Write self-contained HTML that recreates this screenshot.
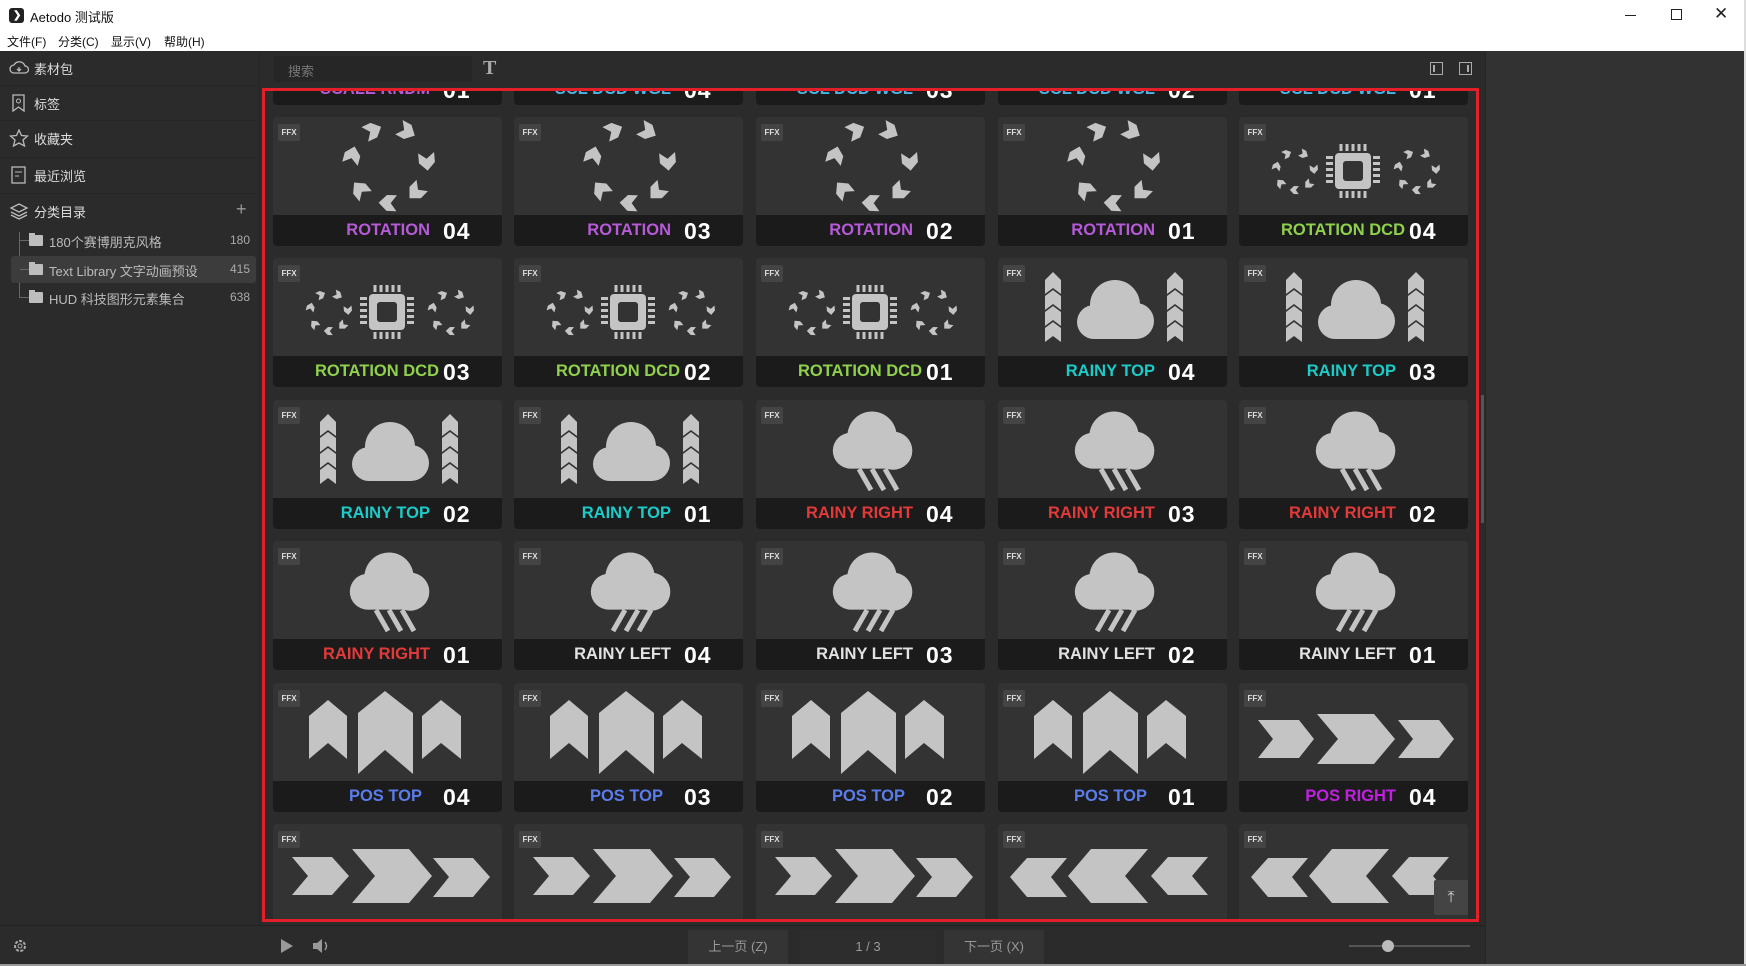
<!DOCTYPE html>
<html><head><meta charset="utf-8">
<style>
*{margin:0;padding:0;box-sizing:border-box}
body{width:1746px;height:966px;overflow:hidden;background:#2b2b2b;font-family:"Liberation Sans","Noto Sans CJK SC",sans-serif;position:relative;color:#ddd}
.abs{position:absolute}
#title{left:0;top:0;width:1746px;height:31px;background:#fff;color:#111;font-size:13px}
#menu{left:0;top:31px;width:1746px;height:20px;background:#fff;color:#111;font-size:12px}
#side{left:0;top:51px;width:260px;height:874px;background:#2b2b2b;border-right:1px solid #262626}
.si{position:absolute;left:0;width:260px;height:35px;font-size:13px;color:#ddd;border-bottom:1px solid #262626}
.si span{position:absolute;left:34px;top:8px}
.si svg{position:absolute;left:9px;top:8px}
.tr{position:absolute;left:11px;width:245px;height:27px;font-size:13px;color:#bbb}
.tr .t{position:absolute;left:38px;top:5px}
.tr .cnt{position:absolute;right:6px;top:6px;font-size:12px;color:#aaa}
.tr .fd{position:absolute;left:18px;top:8px;width:14px;height:11px;background:#bdbdbd;border-radius:1px}
.tr .fd:before{content:"";position:absolute;left:0;top:-2px;width:6px;height:3px;background:#bdbdbd}
#grid{left:265px;top:91px;width:1211px;height:828px;overflow:hidden;background:#2b2b2b}
.c{position:absolute;width:229px;height:129px;background:#333;border-radius:4px}
.c svg{position:absolute;left:0;top:0;width:229px;height:98px}
.f{position:absolute;left:5px;top:7px;width:22px;height:17px;background:#444;border-radius:2px;font:bold 8px "Liberation Sans",sans-serif;color:#ddd;text-align:center;line-height:17px;z-index:2}
.l{position:absolute;left:0;top:98px;width:229px;height:31px;background:#1b1b1b;border-radius:0 0 4px 4px}
.n{position:absolute;right:72px;top:6px;font:bold 16.5px "Liberation Sans",sans-serif;white-space:nowrap}
.d{position:absolute;left:170px;top:3px;font:bold 23px "Liberation Sans",sans-serif;color:#fff;letter-spacing:1px}
.P{color:#b65ad8}.G{color:#8fd04c}.C{color:#1ccbc8}.R{color:#e23a3a}.W{color:#e2e2e2}.B{color:#5b7ceb}.M{color:#c21fe2}.S{color:#4cb4e4}
.btn{position:absolute;top:930px;height:34px;background:#343434;color:#999;font-size:13px;text-align:center;line-height:34px}
</style></head><body>
<svg width="0" height="0" style="position:absolute">
<defs>
<path id="ar" d="M-9,-8 L1,-8 L9,0 L1,8 L-9,8 L-3,0Z"/>
<g id="ring">
<use href="#ar" transform="rotate(-115) translate(38,0) rotate(90)"/>
<use href="#ar" transform="rotate(-62) translate(38,0) rotate(90)"/>
<use href="#ar" transform="rotate(-5) translate(38,0) rotate(90)"/>
<use href="#ar" transform="rotate(45) translate(38,0) rotate(90)"/>
<use href="#ar" transform="rotate(92) translate(38,0) rotate(90)"/>
<use href="#ar" transform="rotate(140) translate(38,0) rotate(90)"/>
<use href="#ar" transform="rotate(195) translate(38,0) rotate(90)"/>
</g>
<symbol id="rot" viewBox="0 0 229 98"><g fill="#c4c4c4" transform="translate(116,48)"><use href="#ring"/></g></symbol>
<symbol id="dcd" viewBox="0 0 229 98"><g fill="#c4c4c4">
<g transform="translate(56,54) scale(0.5)"><use href="#ring"/></g>
<g transform="translate(178,54) scale(0.5)"><use href="#ring"/></g>
<rect x="96" y="36" width="36" height="36" rx="4"/>
<rect x="100.5" y="27" width="3" height="7"/><rect x="106.5" y="27" width="3" height="7"/><rect x="112.5" y="27" width="3" height="7"/><rect x="118.5" y="27" width="3" height="7"/><rect x="124.5" y="27" width="3" height="7"/>
<rect x="100.5" y="74" width="3" height="7"/><rect x="106.5" y="74" width="3" height="7"/><rect x="112.5" y="74" width="3" height="7"/><rect x="118.5" y="74" width="3" height="7"/><rect x="124.5" y="74" width="3" height="7"/>
<rect x="87" y="39" width="7" height="3"/><rect x="87" y="45" width="7" height="3"/><rect x="87" y="51" width="7" height="3"/><rect x="87" y="57" width="7" height="3"/><rect x="87" y="63" width="7" height="3"/>
<rect x="134" y="39" width="7" height="3"/><rect x="134" y="45" width="7" height="3"/><rect x="134" y="51" width="7" height="3"/><rect x="134" y="57" width="7" height="3"/><rect x="134" y="63" width="7" height="3"/>
</g><rect x="104" y="44" width="20" height="20" rx="3" fill="#333"/></symbol>
<g id="stk"><path d="M-8,-30 L0,-38 L8,-30 L8,-16 L0,-22 L-8,-16Z M-8,-14 L0,-20 L8,-14 L8,0 L0,-6 L-8,0Z M-8,2 L0,-4 L8,2 L8,16 L0,10 L-8,16Z M-8,18 L0,12 L8,18 L8,32 L0,26 L-8,32Z"/></g>
<symbol id="rtop" viewBox="0 0 229 98"><g fill="#c4c4c4">
<circle cx="96" cy="64" r="17"/><circle cx="117" cy="47" r="25"/><circle cx="138" cy="63" r="18"/><rect x="96" y="55" width="42" height="26"/>
<use href="#stk" transform="translate(55,52)"/><use href="#stk" transform="translate(177,52)"/></g></symbol>
<g id="cl" transform="translate(116,44) scale(1.12) translate(-116,-40)"><circle cx="97" cy="46" r="16"/><circle cx="116" cy="33" r="22"/><circle cx="135" cy="46" r="17"/><rect x="97" y="40" width="38" height="22"/></g>
<symbol id="rr" viewBox="0 0 229 98"><g fill="#c4c4c4"><use href="#cl"/></g><g stroke="#c4c4c4" stroke-width="5"><path d="M103,69 L115,90 M116,69 L128,90 M129,69 L141,90"/></g></symbol>
<symbol id="rl" viewBox="0 0 229 98"><g fill="#c4c4c4"><use href="#cl"/></g><g stroke="#c4c4c4" stroke-width="5"><path d="M111,69 L99,90 M124,69 L112,90 M137,69 L125,90"/></g></symbol>
<symbol id="ptop" viewBox="0 0 229 98"><g fill="#c4c4c4">
<path d="M36,33 L55,17 L74,33 L74,76 L55,60 L36,76Z"/>
<path d="M85,30 L112,8 L140,30 L140,91 L112,67 L85,91Z"/>
<path d="M149,33 L168,17 L188,33 L188,76 L168,60 L149,76Z"/></g></symbol>
<symbol id="pr" viewBox="0 0 229 98"><g fill="#c4c4c4">
<path d="M19,33 L59,33 L76,52 L59,71 L19,71 L35,52Z"/>
<path d="M79,25 L136,25 L159,52 L136,79 L79,79 L102,52Z"/>
<path d="M160,34 L200,34 L217,53 L200,73 L160,73 L176,53Z"/></g></symbol>
<symbol id="prs" viewBox="0 0 229 98"><g fill="#c4c4c4">
<path d="M19,37 L60,37 L75,56 L60,75 L19,75 L34,56Z"/>
<path d="M78,31 L135,31 L156,56 L135,81 L78,81 L99,56Z"/>
<path d="M159,37 L200,37 L215,56 L200,75 L159,75 L174,56Z"/></g></symbol>
<symbol id="pl" viewBox="0 0 229 98"><g transform="translate(229,0) scale(-1,1)"><use href="#pr"/></g></symbol>
</defs></svg>

<div id="title" class="abs">
<div class="abs" style="left:9px;top:8px;width:15px;height:15px;background:#222;border-radius:3px"></div>
<div class="abs" style="left:13px;top:10px;color:#fff;font-size:10px;font-weight:bold">&#10095;</div>
<div class="abs" style="left:30px;top:7px">Aetodo 测试版</div>
<div class="abs" style="left:1625px;top:15px;width:11px;height:1px;background:#222"></div>
<div class="abs" style="left:1671px;top:9px;width:11px;height:11px;border:1px solid #222"></div>
<div class="abs" style="left:1714px;top:4px;font-size:17px;color:#222">&#x2715;</div>
</div>
<div id="menu" class="abs"><span class="abs" style="left:7px;top:2px">文件(F)</span><span class="abs" style="left:58px;top:2px">分类(C)</span><span class="abs" style="left:111px;top:2px">显示(V)</span><span class="abs" style="left:164px;top:2px">帮助(H)</span></div>

<div id="side" class="abs">
<div class="si" style="top:0"><svg width="20" height="18"><path d="M5,14 A4,4 0 0 1 5,6 A6,6 0 0 1 16,7 A3.5,3.5 0 0 1 16,14Z M10,8 V12 M8,10 L10,12 L12,10" fill="none" stroke="#bbb" stroke-width="1.3"/></svg><span>素材包</span></div>
<div class="si" style="top:35px"><svg width="20" height="18"><path d="M4,1 H15 V17 L9.5,13 L4,17Z" fill="none" stroke="#bbb" stroke-width="1.3"/><circle cx="9.5" cy="7" r="2" fill="none" stroke="#bbb"/></svg><span>标签</span></div>
<div class="si" style="top:70px;height:37px"><svg width="20" height="18"><path d="M10,1 L12.5,6.5 L18.5,7 L14,11 L15.5,17 L10,14 L4.5,17 L6,11 L1.5,7 L7.5,6.5Z" fill="none" stroke="#bbb" stroke-width="1.3"/></svg><span>收藏夹</span></div>
<div class="si" style="top:107px;height:36px"><svg width="20" height="18"><rect x="3" y="1" width="13" height="16" fill="none" stroke="#bbb" stroke-width="1.3"/><path d="M6,6 H13 M6,10 H10" stroke="#bbb"/></svg><span>最近浏览</span></div>
<div class="si" style="top:143px;border:none"><svg width="20" height="18"><path d="M10,2 L18,6 L10,10 L2,6Z M2,10 L10,14 L18,10 M2,13 L10,17 L18,13" fill="none" stroke="#bbb" stroke-width="1.3"/></svg><span>分类目录</span><span style="left:236px;top:5px;font-size:18px;color:#999">+</span></div>
<div class="abs" style="left:19px;top:181px;width:1px;height:66px;background:#666"></div>
<div class="tr" style="top:176px"><div class="abs" style="left:9px;top:13px;width:9px;height:1px;background:#666"></div><div class="fd"></div><span class="t">180个赛博朋克风格</span><span class="cnt">180</span></div>
<div class="tr" style="top:205px;background:#3c3c3c;border-radius:3px"><div class="abs" style="left:9px;top:13px;width:9px;height:1px;background:#666"></div><div class="fd"></div><span class="t">Text Library 文字动画预设</span><span class="cnt">415</span></div>
<div class="tr" style="top:233px"><div class="abs" style="left:9px;top:13px;width:9px;height:1px;background:#666"></div><div class="fd"></div><span class="t">HUD 科技图形元素集合</span><span class="cnt">638</span></div>
</div>

<div class="abs" style="left:261px;top:51px;width:1224px;height:37px;background:#2b2b2b"></div>
<div class="abs" style="left:274px;top:56px;width:198px;height:26px;background:#262626;color:#777;font-size:13px;padding:5px 14px">搜索</div>
<div class="abs" style="left:483px;top:57px;font:bold 20px 'Liberation Serif',serif;color:#aaa">T</div>
<div class="abs" style="left:1430px;top:62px;width:13px;height:13px;border:1px solid #aaa"><div style="position:absolute;left:2px;top:2px;width:2px;height:7px;background:#aaa"></div></div>
<div class="abs" style="left:1459px;top:62px;width:13px;height:13px;border:1px solid #aaa"><div style="position:absolute;right:2px;top:2px;width:2px;height:7px;background:#aaa"></div></div>

<div class="abs" style="left:1485px;top:51px;width:259px;height:913px;background:#323232;border-left:1px solid #262626"></div>
<div class="abs" style="left:1744px;top:0;width:2px;height:966px;background:#ddd"></div>

<div id="grid" class="abs">
<div class="c" style="left:8px;top:-115px"><div class="l"><span class="n P">SCALE RNDM</span><span class="d">01</span></div></div>
<div class="c" style="left:249px;top:-115px"><div class="l"><span class="n S">SCL DCD WGL</span><span class="d">04</span></div></div>
<div class="c" style="left:491px;top:-115px"><div class="l"><span class="n S">SCL DCD WGL</span><span class="d">03</span></div></div>
<div class="c" style="left:733px;top:-115px"><div class="l"><span class="n S">SCL DCD WGL</span><span class="d">02</span></div></div>
<div class="c" style="left:974px;top:-115px"><div class="l"><span class="n S">SCL DCD WGL</span><span class="d">01</span></div></div>
<div class="c" style="left:8px;top:26px"><b class="f">FFX</b><svg><use href="#rot"/></svg><div class="l"><span class="n P">ROTATION</span><span class="d">04</span></div></div>
<div class="c" style="left:249px;top:26px"><b class="f">FFX</b><svg><use href="#rot"/></svg><div class="l"><span class="n P">ROTATION</span><span class="d">03</span></div></div>
<div class="c" style="left:491px;top:26px"><b class="f">FFX</b><svg><use href="#rot"/></svg><div class="l"><span class="n P">ROTATION</span><span class="d">02</span></div></div>
<div class="c" style="left:733px;top:26px"><b class="f">FFX</b><svg><use href="#rot"/></svg><div class="l"><span class="n P">ROTATION</span><span class="d">01</span></div></div>
<div class="c" style="left:974px;top:26px"><b class="f">FFX</b><svg><use href="#dcd"/></svg><div class="l"><span class="n G" style="right:63px">ROTATION DCD</span><span class="d">04</span></div></div>
<div class="c" style="left:8px;top:167px"><b class="f">FFX</b><svg><use href="#dcd"/></svg><div class="l"><span class="n G" style="right:63px">ROTATION DCD</span><span class="d">03</span></div></div>
<div class="c" style="left:249px;top:167px"><b class="f">FFX</b><svg><use href="#dcd"/></svg><div class="l"><span class="n G" style="right:63px">ROTATION DCD</span><span class="d">02</span></div></div>
<div class="c" style="left:491px;top:167px"><b class="f">FFX</b><svg><use href="#dcd"/></svg><div class="l"><span class="n G" style="right:63px">ROTATION DCD</span><span class="d">01</span></div></div>
<div class="c" style="left:733px;top:167px"><b class="f">FFX</b><svg><use href="#rtop"/></svg><div class="l"><span class="n C">RAINY TOP</span><span class="d">04</span></div></div>
<div class="c" style="left:974px;top:167px"><b class="f">FFX</b><svg><use href="#rtop"/></svg><div class="l"><span class="n C">RAINY TOP</span><span class="d">03</span></div></div>
<div class="c" style="left:8px;top:309px"><b class="f">FFX</b><svg><use href="#rtop"/></svg><div class="l"><span class="n C">RAINY TOP</span><span class="d">02</span></div></div>
<div class="c" style="left:249px;top:309px"><b class="f">FFX</b><svg><use href="#rtop"/></svg><div class="l"><span class="n C">RAINY TOP</span><span class="d">01</span></div></div>
<div class="c" style="left:491px;top:309px"><b class="f">FFX</b><svg><use href="#rr"/></svg><div class="l"><span class="n R">RAINY RIGHT</span><span class="d">04</span></div></div>
<div class="c" style="left:733px;top:309px"><b class="f">FFX</b><svg><use href="#rr"/></svg><div class="l"><span class="n R">RAINY RIGHT</span><span class="d">03</span></div></div>
<div class="c" style="left:974px;top:309px"><b class="f">FFX</b><svg><use href="#rr"/></svg><div class="l"><span class="n R">RAINY RIGHT</span><span class="d">02</span></div></div>
<div class="c" style="left:8px;top:450px"><b class="f">FFX</b><svg><use href="#rr"/></svg><div class="l"><span class="n R">RAINY RIGHT</span><span class="d">01</span></div></div>
<div class="c" style="left:249px;top:450px"><b class="f">FFX</b><svg><use href="#rl"/></svg><div class="l"><span class="n W">RAINY LEFT</span><span class="d">04</span></div></div>
<div class="c" style="left:491px;top:450px"><b class="f">FFX</b><svg><use href="#rl"/></svg><div class="l"><span class="n W">RAINY LEFT</span><span class="d">03</span></div></div>
<div class="c" style="left:733px;top:450px"><b class="f">FFX</b><svg><use href="#rl"/></svg><div class="l"><span class="n W">RAINY LEFT</span><span class="d">02</span></div></div>
<div class="c" style="left:974px;top:450px"><b class="f">FFX</b><svg><use href="#rl"/></svg><div class="l"><span class="n W">RAINY LEFT</span><span class="d">01</span></div></div>
<div class="c" style="left:8px;top:592px"><b class="f">FFX</b><svg><use href="#ptop"/></svg><div class="l"><span class="n B" style="right:80px">POS TOP</span><span class="d">04</span></div></div>
<div class="c" style="left:249px;top:592px"><b class="f">FFX</b><svg><use href="#ptop"/></svg><div class="l"><span class="n B" style="right:80px">POS TOP</span><span class="d">03</span></div></div>
<div class="c" style="left:491px;top:592px"><b class="f">FFX</b><svg><use href="#ptop"/></svg><div class="l"><span class="n B" style="right:80px">POS TOP</span><span class="d">02</span></div></div>
<div class="c" style="left:733px;top:592px"><b class="f">FFX</b><svg><use href="#ptop"/></svg><div class="l"><span class="n B" style="right:80px">POS TOP</span><span class="d">01</span></div></div>
<div class="c" style="left:974px;top:592px"><b class="f">FFX</b><svg><use href="#prs"/></svg><div class="l"><span class="n M">POS RIGHT</span><span class="d">04</span></div></div>
<div class="c" style="left:8px;top:733px"><b class="f">FFX</b><svg><use href="#pr"/></svg></div>
<div class="c" style="left:249px;top:733px"><b class="f">FFX</b><svg><use href="#pr"/></svg></div>
<div class="c" style="left:491px;top:733px"><b class="f">FFX</b><svg><use href="#pr"/></svg></div>
<div class="c" style="left:733px;top:733px"><b class="f">FFX</b><svg><use href="#pl"/></svg></div>
<div class="c" style="left:974px;top:733px"><b class="f">FFX</b><svg><use href="#pl"/></svg></div>
<div class="abs" style="left:1169px;top:789px;width:34px;height:35px;background:#444;border-radius:2px;color:#ccc;text-align:center;font-size:16px;line-height:35px">&#x2912;</div>
</div>
<div class="abs" style="left:262px;top:88px;width:1217px;height:834px;border:3px solid #e3202a"></div>
<div class="abs" style="left:1481px;top:395px;width:3px;height:128px;background:#555"></div>

<div class="abs" style="left:0;top:925px;width:1485px;height:1px;background:#222"></div>
<svg class="abs" style="left:12px;top:938px" width="16" height="16"><circle cx="8" cy="8" r="5" fill="none" stroke="#aaa" stroke-width="2" stroke-dasharray="3 1.5"/><circle cx="8" cy="8" r="2" fill="none" stroke="#aaa"/></svg>
<svg class="abs" style="left:280px;top:938px" width="14" height="16"><path d="M1,1 L13,8 L1,15Z" fill="#999"/></svg>
<svg class="abs" style="left:312px;top:938px" width="18" height="16"><path d="M1,5 H5 L10,1 V15 L5,11 H1Z" fill="#999"/><path d="M13,4 Q16,8 13,12" fill="none" stroke="#999" stroke-width="1.5"/></svg>
<div class="btn" style="left:688px;width:100px">上一页 (Z)</div>
<div class="btn" style="left:800px;width:136px;background:#2d2d2d">1 / 3</div>
<div class="btn" style="left:944px;width:100px">下一页 (X)</div>
<div class="abs" style="left:1349px;top:945px;width:121px;height:2px;background:#555"></div>
<div class="abs" style="left:1382px;top:940px;width:12px;height:12px;border-radius:50%;background:#bbb"></div>
<div class="abs" style="left:0;top:964px;width:1746px;height:2px;background:#999"></div>
</body></html>
